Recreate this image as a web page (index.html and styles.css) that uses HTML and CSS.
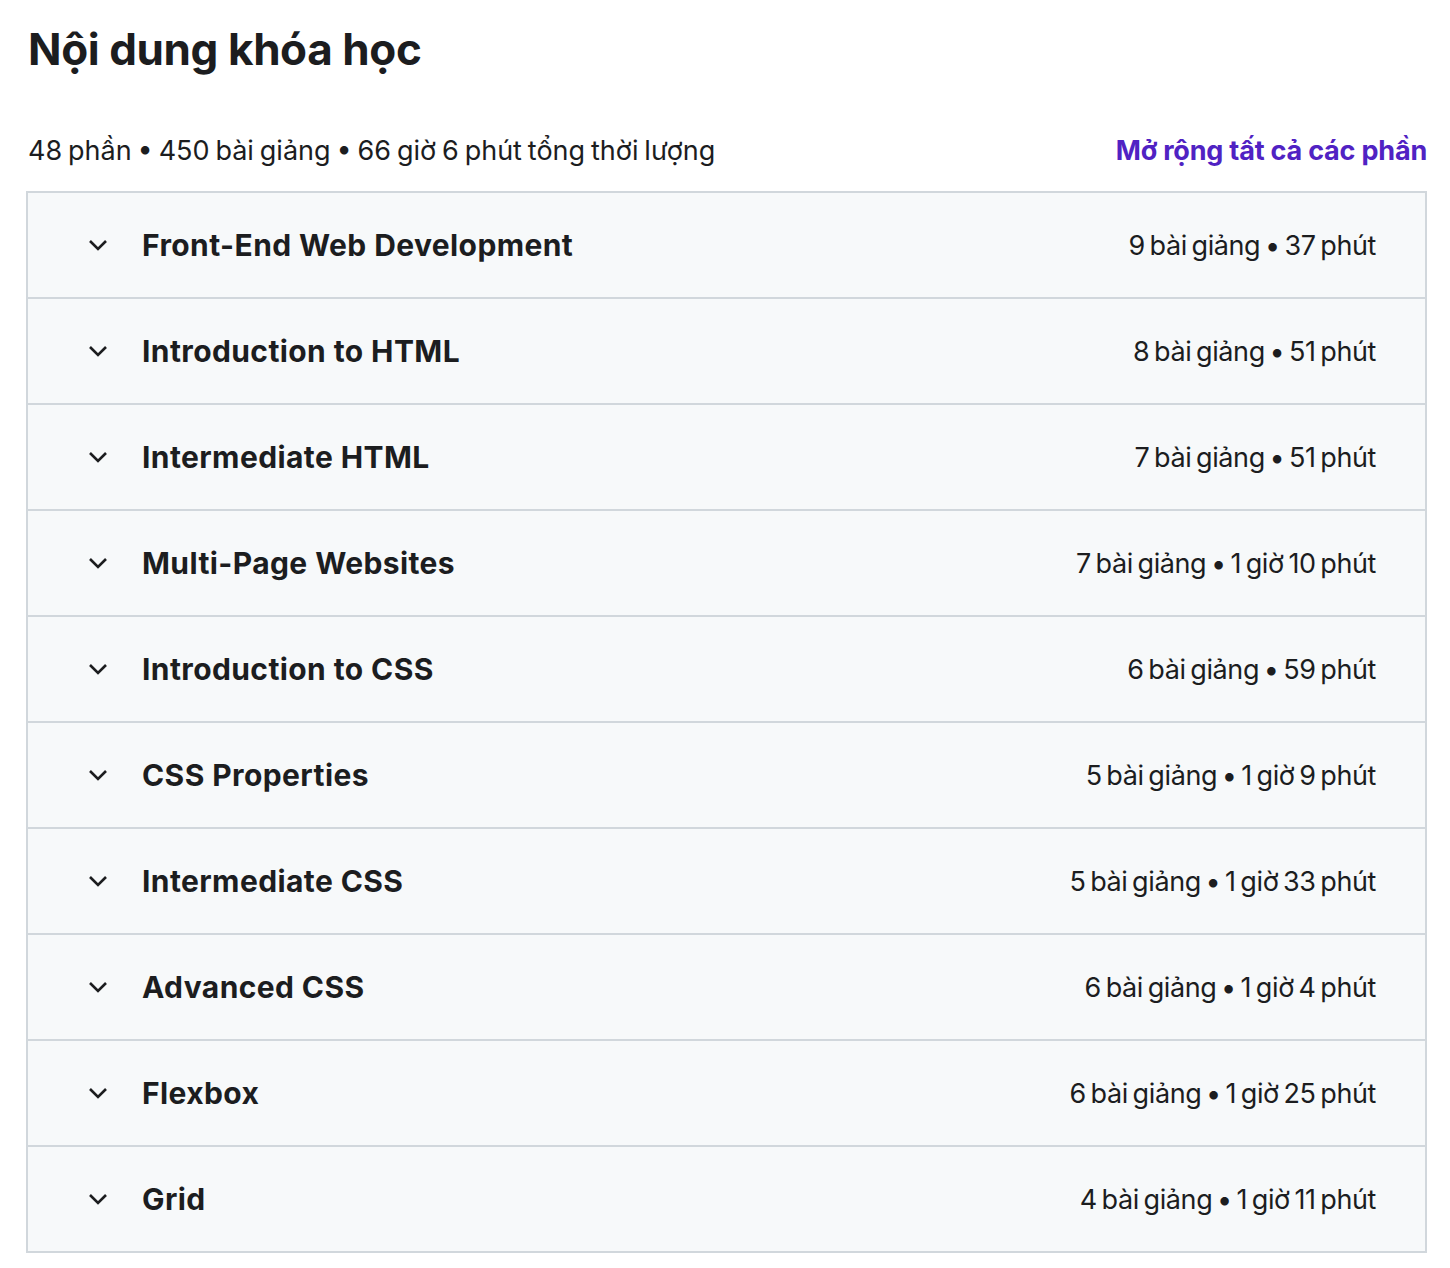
FILE: index.html
```html
<!DOCTYPE html>
<html lang="vi">
  <head>
    <meta charset="utf-8">
    <title>Nội dung khóa học</title>
    <link rel="stylesheet" href="styles.css">
  </head>
  <body>
    <section class="curriculum">
      <h2 class="curriculum__title">Nội dung khóa học</h2>

      <div class="curriculum__meta">
        <span>48 phần • 450 bài giảng • 66 giờ 6 phút tổng thời lượng</span>
        <button class="curriculum__toggle" type="button">Mở rộng tất cả các phần</button>
      </div>

      <div class="sections">
        <div class="section">
          <svg class="section__icon" viewBox="0 0 20 12"><path d="M2 2l8 8 8-8"/></svg>
          <span class="section__name">Front-End Web Development</span>
          <span class="section__info">9 bài giảng • 37 phút</span>
        </div>
        <div class="section">
          <svg class="section__icon" viewBox="0 0 20 12"><path d="M2 2l8 8 8-8"/></svg>
          <span class="section__name">Introduction to HTML</span>
          <span class="section__info">8 bài giảng • 51 phút</span>
        </div>
        <div class="section">
          <svg class="section__icon" viewBox="0 0 20 12"><path d="M2 2l8 8 8-8"/></svg>
          <span class="section__name">Intermediate HTML</span>
          <span class="section__info">7 bài giảng • 51 phút</span>
        </div>
        <div class="section">
          <svg class="section__icon" viewBox="0 0 20 12"><path d="M2 2l8 8 8-8"/></svg>
          <span class="section__name">Multi-Page Websites</span>
          <span class="section__info">7 bài giảng • 1 giờ 10 phút</span>
        </div>
        <div class="section">
          <svg class="section__icon" viewBox="0 0 20 12"><path d="M2 2l8 8 8-8"/></svg>
          <span class="section__name">Introduction to CSS</span>
          <span class="section__info">6 bài giảng • 59 phút</span>
        </div>
        <div class="section">
          <svg class="section__icon" viewBox="0 0 20 12"><path d="M2 2l8 8 8-8"/></svg>
          <span class="section__name">CSS Properties</span>
          <span class="section__info">5 bài giảng • 1 giờ 9 phút</span>
        </div>
        <div class="section">
          <svg class="section__icon" viewBox="0 0 20 12"><path d="M2 2l8 8 8-8"/></svg>
          <span class="section__name">Intermediate CSS</span>
          <span class="section__info">5 bài giảng • 1 giờ 33 phút</span>
        </div>
        <div class="section">
          <svg class="section__icon" viewBox="0 0 20 12"><path d="M2 2l8 8 8-8"/></svg>
          <span class="section__name">Advanced CSS</span>
          <span class="section__info">6 bài giảng • 1 giờ 4 phút</span>
        </div>
        <div class="section">
          <svg class="section__icon" viewBox="0 0 20 12"><path d="M2 2l8 8 8-8"/></svg>
          <span class="section__name">Flexbox</span>
          <span class="section__info">6 bài giảng • 1 giờ 25 phút</span>
        </div>
        <div class="section">
          <svg class="section__icon" viewBox="0 0 20 12"><path d="M2 2l8 8 8-8"/></svg>
          <span class="section__name">Grid</span>
          <span class="section__info">4 bài giảng • 1 giờ 11 phút</span>
        </div>
      </div>
    </section>
  </body>
</html>
```

FILE: styles.css
```css
body {
  margin: 0;
  background: #fff;
  color: #1c1d1f;
  font-family: Inter, "Noto Sans", sans-serif;
}

.curriculum {
  width: 1401px;
  margin-left: 26px;
  padding-top: 21px;
}

.curriculum__title {
  margin: 0 0 0 2px;
  font-size: 44px;
  line-height: 56px;
  font-weight: 700;
  letter-spacing: -0.4px;
}

.curriculum__meta {
  display: flex;
  justify-content: space-between;
  align-items: center;
  margin-top: 53px;
  height: 40px;
  padding-left: 2px;
  font-size: 27px;
  word-spacing: -1.7px;
  margin-bottom: 21px;
}

.curriculum__toggle {
  border: 0;
  background: none;
  padding: 0;
  font-family: inherit;
  font-size: 27px;
  font-weight: 700;
  letter-spacing: -0.2px;
  word-spacing: 0;
  color: #5022c3;
  cursor: pointer;
}

.sections {
  border: 2px solid #d1d7dc;
  border-bottom: 0;
}

.section {
  display: flex;
  align-items: center;
  height: 104px;
  padding: 0 49px 0 60px;
  background: #f7f9fa;
  border-bottom: 2px solid #d1d7dc;
}

.section__icon {
  width: 20px;
  height: 12px;
  margin-right: 34px;
  fill: none;
  stroke: #1c1d1f;
  stroke-width: 2.6;
}

.section__name {
  flex: 1;
  font-size: 30px;
  font-weight: 700;
  letter-spacing: 0.4px;
}

.section__info {
  font-size: 27px;
  letter-spacing: -0.4px;
  word-spacing: -2.5px;
}
```
